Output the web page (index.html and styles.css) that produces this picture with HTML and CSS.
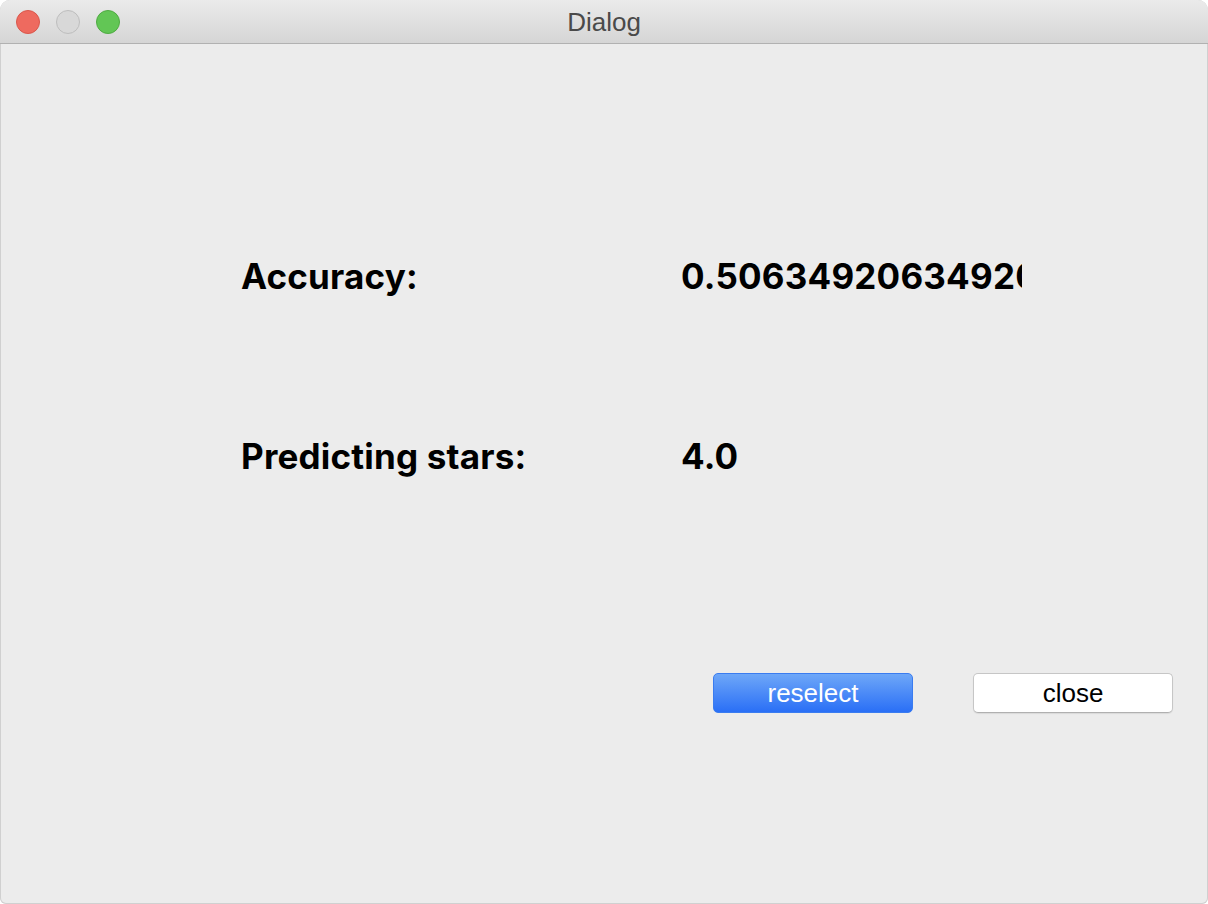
FILE: index.html
```html
<!DOCTYPE html>
<html>
<head>
<meta charset="utf-8">
<link rel="stylesheet" href="styles.css">
<title>Dialog</title>
</head>
<body>
<div class="window">
  <div class="titlebar">
    <div class="lights">
      <span class="light close-light"></span>
      <span class="light min-light"></span>
      <span class="light max-light"></span>
    </div>
    <div class="title">Dialog</div>
  </div>
  <div class="content">
    <div class="rows">
      <div class="row row-first">
        <div class="label">Accuracy:</div>
        <div class="value">0.5063492063492063</div>
      </div>
      <div class="row row-second">
        <div class="label">Predicting stars:</div>
        <div class="value">4.0</div>
      </div>
    </div>
    <div class="buttons">
      <button class="btn btn-primary">reselect</button>
      <button class="btn btn-default">close</button>
    </div>
  </div>
</div>
</body>
</html>
```

FILE: styles.css
```css
html, body {
  margin: 0;
  padding: 0;
  background: #ffffff;
}
body {
  width: 1208px;
  height: 904px;
  overflow: hidden;
  font-family: "Inter", "Liberation Sans", sans-serif;
}
.window {
  width: 1208px;
  height: 904px;
  box-sizing: border-box;
  border-radius: 10px 10px 6px 6px;
  overflow: hidden;
  background: #ececec;
  display: flex;
  flex-direction: column;
  box-shadow: inset 0 0 0 1px #d0d0d0;
}
.titlebar {
  position: relative;
  height: 44px;
  flex: 0 0 44px;
  box-sizing: border-box;
  background: linear-gradient(#ebebeb, #d5d5d5);
  border-bottom: 1px solid #b1b1b1;
  display: flex;
  align-items: center;
  justify-content: center;
}
.lights {
  position: absolute;
  left: 16px;
  top: 10px;
  display: flex;
  gap: 16px;
}
.light {
  width: 24px;
  height: 24px;
  box-sizing: border-box;
  border-radius: 50%;
  display: block;
}
.close-light {
  background: #ee6a5f;
  border: 1px solid #d9574c;
}
.min-light {
  background: #d8d8d8;
  border: 1px solid #bdbdbd;
}
.max-light {
  background: #62c655;
  border: 1px solid #4faa42;
}
.title {
  font-family: "Liberation Sans", "Inter", sans-serif;
  font-size: 26px;
  color: #4a4a4a;
  padding-top: 1px;
}
.content {
  flex: 1;
  display: flex;
  flex-direction: column;
}
.rows {
  display: flex;
  flex-direction: column;
  padding-left: 241px;
  padding-top: 212px;
  gap: 140px;
}
.row {
  display: flex;
  height: 40px;
  align-items: center;
}
.label, .value {
  font-weight: 700;
  font-size: 35px;
  letter-spacing: 0.2px;
  color: #000;
  white-space: nowrap;
  line-height: 40px;
}
.label {
  width: 440px;
  flex: 0 0 440px;
}
.value {
  width: 341px;
  overflow: hidden;
}
.buttons {
  display: flex;
  justify-content: flex-end;
  gap: 60px;
  padding-right: 35px;
  margin-top: 197px;
}
.btn {
  width: 200px;
  height: 40px;
  box-sizing: border-box;
  border-radius: 5px;
  font-family: "Liberation Sans", "Inter", sans-serif;
  font-size: 26px;
  padding: 0;
  margin: 0;
}
.btn-primary {
  color: #ffffff;
  background: linear-gradient(#6ea7f8, #2a6ff6);
  border: 1px solid #3a7cf0;
}
.btn-default {
  color: #000000;
  background: #ffffff;
  border: 1px solid #c6c6c6;
  border-bottom-color: #b0b0b0;
  box-shadow: 0 1px 1px rgba(0,0,0,0.08);
}
```
